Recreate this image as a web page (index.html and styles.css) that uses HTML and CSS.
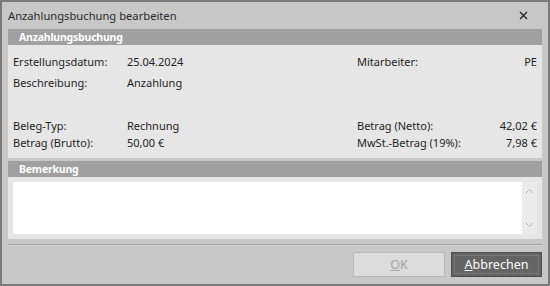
FILE: index.html
```html
<!DOCTYPE html>
<html lang="de">
<head>
    <meta charset="UTF-8">
    <title>Anzahlungsbuchung bearbeiten</title>
    <link rel="stylesheet" href="styles.css">
</head>
<body>
    <div class="window">
        <div class="titlebar">
            <span class="title">Anzahlungsbuchung bearbeiten</span>
            <svg class="close" width="9" height="9" viewBox="0 0 9 9">
                <path d="M1 1 L8 8 M8 1 L1 8" stroke="#222" stroke-width="1.3" fill="none"/>
            </svg>
        </div>

        <div class="section">
            <div class="section-header">Anzahlungsbuchung</div>
            <div class="panel details">
                <div class="grid">
                    <span>Erstellungsdatum:</span>
                    <span>25.04.2024</span>
                    <span>Mitarbeiter:</span>
                    <span class="num">PE</span>
                    <span>Beschreibung:</span>
                    <span>Anzahlung</span>
                    <span></span>
                    <span></span>
                </div>
                <div class="grid amounts">
                    <span>Beleg-Typ:</span>
                    <span>Rechnung</span>
                    <span>Betrag (Netto):</span>
                    <span class="num">42,02 €</span>
                    <span>Betrag (Brutto):</span>
                    <span>50,00 €</span>
                    <span>MwSt.-Betrag (19%):</span>
                    <span class="num">7,98 €</span>
                </div>
            </div>
        </div>

        <div class="section">
            <div class="section-header">Bemerkung</div>
            <div class="panel note">
                <div class="note-box">
                    <div class="note-text"></div>
                    <div class="scrollbar">
                        <svg width="9" height="6" viewBox="0 0 9 6"><path d="M1 5 L4.5 1.5 L8 5" stroke="#b4b4b4" stroke-width="1" fill="none"/></svg>
                        <svg width="9" height="6" viewBox="0 0 9 6"><path d="M1 1 L4.5 4.5 L8 1" stroke="#b4b4b4" stroke-width="1" fill="none"/></svg>
                    </div>
                </div>
            </div>
        </div>

        <div class="separator"></div>

        <div class="buttons">
            <button class="btn disabled"><u>O</u>K</button>
            <button class="btn primary"><span class="focus"><u>A</u>bbrechen</span></button>
        </div>
    </div>
</body>
</html>
```

FILE: styles.css
```css
/* Window */
body {
    margin: 0;
    font-family: 'Segoe UI', 'Noto Sans', sans-serif;
    font-size: 11px;
    color: #1e1e1e;
}

.window {
    width: 550px;
    height: 286px;
    box-sizing: border-box;
    border: 2px solid #7a7a7a;
    background-color: #c8c8c8;
    display: flex;
    flex-direction: column;
}

/* Title bar */
.titlebar {
    height: 27px;
    display: flex;
    align-items: center;
    justify-content: space-between;
    padding: 0 20px 0 6px;
}

.title {
    font-size: 11.2px;
    color: #2a2a2a;
}

/* Sections */
.section {
    margin: 0 6px;
}

.section + .section {
    margin-top: 3px;
}

.section-header {
    height: 16px;
    line-height: 16px;
    background-color: #a0a0a0;
    color: #fff;
    font-weight: bold;
    font-size: 10.5px;
    letter-spacing: -0.2px;
    padding-left: 11px;
}

.panel {
    background-color: #e6e6e6;
}

.details {
    height: 113px;
    box-sizing: border-box;
    padding: 8px 5px 0 5px;
}

.grid {
    display: grid;
    grid-template-columns: 114px 230px 1fr auto;
    grid-auto-rows: 17px;
    row-gap: 4px;
    line-height: 17px;
}

.amounts {
    margin-top: 26px;
    row-gap: 0;
}

.num {
    text-align: right;
}

/* Note */
.note {
    padding: 5px;
}

.note-box {
    display: flex;
    height: 52px;
}

.note-text {
    flex: 1;
    background-color: #fff;
}

.scrollbar {
    width: 15px;
    background-color: #ebebeb;
    display: flex;
    flex-direction: column;
    justify-content: space-between;
    align-items: center;
    padding: 6px 0;
    box-sizing: border-box;
}

.scrollbar svg {
    display: block;
}

/* Footer */
.separator {
    margin: 5px 6px 0 6px;
    border-top: 1px solid #a6a6a6;
    border-bottom: 1px solid #d4d4d4;
}

.buttons {
    display: flex;
    justify-content: flex-end;
    gap: 6px;
    padding: 6px 6px 0 0;
}

.btn {
    width: 92px;
    height: 25px;
    font-family: inherit;
    font-size: 12.5px;
    padding: 0;
    box-sizing: border-box;
}

.btn.disabled {
    background-color: #dcdcdc;
    border: 1px solid #b8b8b8;
    color: #a6a6a6;
}

.btn.primary {
    width: 91px;
    background-color: #646464;
    border: 1px solid #4e4e4e;
    color: #fff;
    padding: 2px;
}

.focus {
    display: flex;
    align-items: center;
    justify-content: center;
    height: 100%;
    border: 1px dotted #8a8a8a;
    box-sizing: border-box;
}
```
